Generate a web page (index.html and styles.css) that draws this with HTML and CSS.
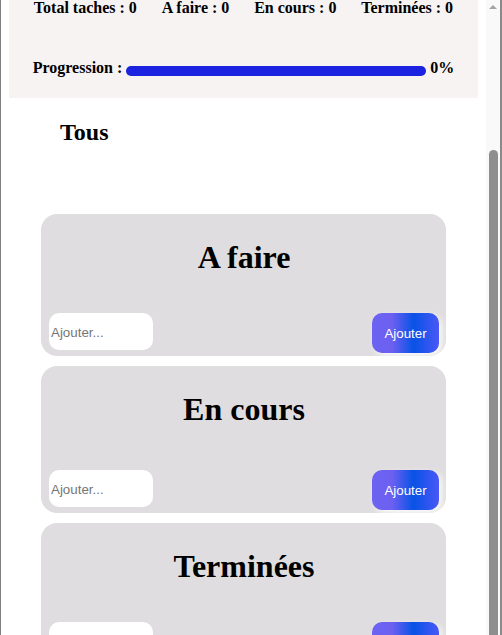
FILE: index.html
```html
<!DOCTYPE html>
<html lang="fr">
<head>
<meta charset="utf-8">
<title>Tâches</title>
<link rel="stylesheet" href="styles.css">
</head>
<body>
<div class="frame">
  <div class="viewport">
    <section class="summary">
      <div class="stats">
        <span>Total taches : 0</span>
        <span>A faire : 0</span>
        <span>En cours : 0</span>
        <span>Terminées : 0</span>
      </div>
      <div class="progress-row">Progression : <span class="bar"></span> 0%</div>
    </section>
    <main class="board">
      <h2 class="filter">Tous</h2>
      <div class="columns">
        <section class="card">
          <h1 class="card-title">A faire</h1>
          <div class="tasks"></div>
          <div class="add-row">
            <input class="add-input" type="text" placeholder="Ajouter...">
            <button class="add-btn">Ajouter</button>
          </div>
        </section>
        <section class="card card--tall">
          <h1 class="card-title">En cours</h1>
          <div class="tasks"></div>
          <div class="add-row">
            <input class="add-input" type="text" placeholder="Ajouter...">
            <button class="add-btn">Ajouter</button>
          </div>
        </section>
        <section class="card">
          <h1 class="card-title">Terminées</h1>
          <div class="tasks"></div>
          <div class="add-row">
            <input class="add-input" type="text" placeholder="Ajouter...">
            <button class="add-btn">Ajouter</button>
          </div>
        </section>
      </div>
    </main>
  </div>
  <div class="scrollbar">
    <span class="arrow"></span>
    <span class="thumb"></span>
  </div>
</div>
</body>
</html>
```

FILE: styles.css
```css
html, body {
  margin: 0;
  padding: 0;
  height: 635px;
  overflow: hidden;
  background: #ffffff;
}

.frame {
  display: flex;
  height: 635px;
  box-sizing: border-box;
  border-left: 1px solid #7f7f7f;
  border-right: 2px solid #8a8a8a;
  font-family: "Liberation Serif", "Times New Roman", serif;
  color: #000;
}

.viewport {
  flex: 1;
  overflow: hidden;
  padding: 0 8px;
  min-width: 0;
}

.summary {
  background: #f7f3f3;
  padding: 0 0 22px;
}

.stats {
  display: flex;
  justify-content: space-evenly;
  font-weight: bold;
  font-size: 16px;
  line-height: 16px;
}

.progress-row {
  margin-top: 44px;
  text-align: center;
  font-weight: bold;
  font-size: 16px;
  line-height: 16px;
}

.bar {
  display: inline-block;
  width: 300px;
  height: 10px;
  border-radius: 5px;
  background: #1b22e0;
  vertical-align: -0.2em;
}

.board {
  padding: 0 32px;
}

.filter {
  margin: 21px 0 68px 19px;
  font-size: 24px;
  font-weight: bold;
}

.card {
  background: #dfdddf;
  border-radius: 16px;
  padding: 25px 7px 3px 8px;
}

.card + .card {
  margin-top: 10px;
}

.card-title {
  margin: 0;
  font-size: 32px;
  font-weight: bold;
  text-align: center;
}

.tasks {
  height: 37px;
}

.card--tall .tasks {
  height: 42px;
}

.add-row {
  display: flex;
  justify-content: space-between;
  align-items: flex-start;
}

.add-input {
  width: 104px;
  height: 37px;
  box-sizing: border-box;
  border: none;
  border-radius: 10px;
  padding: 2px 2px 0;
  background: #ffffff;
  font-family: "Liberation Sans", Arial, sans-serif;
  font-size: 13.333px;
  outline: none;
}

.add-input::placeholder {
  color: #757575;
}

.add-btn {
  width: 67px;
  height: 40px;
  border: none;
  border-radius: 10px;
  padding: 1px 0 0;
  color: #ffffff;
  font-family: "Liberation Sans", Arial, sans-serif;
  font-size: 13.333px;
  background: linear-gradient(90deg, #6c63f2 0%, #6c60f1 30%, #0852e6 62%, #4a58f6 100%);
  box-shadow: 3px 3px 6px rgba(255, 255, 255, 0.9);
}

.scrollbar {
  width: 14px;
  background: #f9f9f9;
  display: flex;
  flex-direction: column;
  align-items: center;
}

.arrow {
  margin-top: 5px;
  width: 0;
  height: 0;
  border-left: 4px solid transparent;
  border-right: 4px solid transparent;
  border-bottom: 4px solid #a3a3a3;
}

.thumb {
  margin-top: auto;
  width: 9px;
  height: 485px;
  border-radius: 5px 5px 0 0;
  background: #8e8e8e;
}
```
